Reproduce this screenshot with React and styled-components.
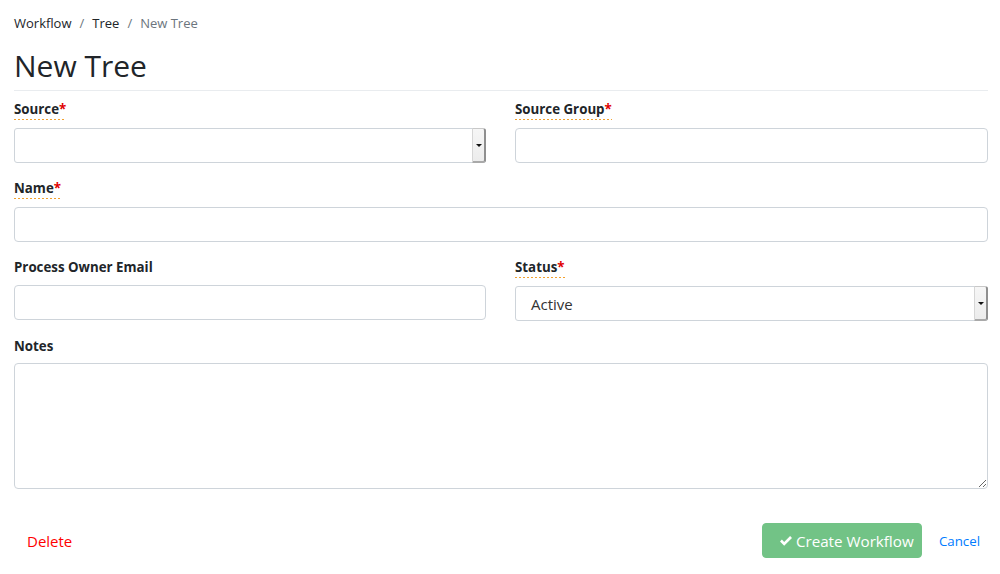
import React from "react";
import styled, { createGlobalStyle } from "styled-components";

const Global = createGlobalStyle`
  html, body { margin: 0; padding: 0; background: #fff; }
  body { font-family: "Open Sans", "Noto Sans", sans-serif; color: #212529; font-size: 15px; }
  * { box-sizing: border-box; }
`;

const Page = styled.div`
  padding: 0 12px 0 14px;
  width: 1000px;
`;

const Breadcrumb = styled.nav`
  display: flex;
  align-items: center;
  padding-top: 13px;
  font-size: 13px;
  line-height: 21px;
  height: 34px;
`;

const Crumb = styled.span`
  color: ${(p) => (p.$active ? "#6c757d" : "#212529")};
`;

const Sep = styled.span`
  color: #6c757d;
  padding: 0 8px;
`;

const TitleBar = styled.div`
  margin-top: 13px;
  padding-bottom: 5px;
  border-bottom: 1px solid #e9ecef;
`;

const Title = styled.h1`
  margin: 0;
  font-size: 30px;
  font-weight: 400;
  line-height: 38px;
  color: #212529;
`;

const Form = styled.div`
  display: grid;
  grid-template-columns: 472px 1fr;
  column-gap: 29px;
  row-gap: 15px;
  padding-top: 8px;
`;

const Group = styled.div`
  display: flex;
  flex-direction: column;
  align-items: flex-start;
  grid-column: ${(p) => (p.$full ? "1 / -1" : "auto")};
`;

const Label = styled.label`
  position: relative;
  display: inline-block;
  font-size: 13.3px;
  font-weight: 700;
  line-height: 20px;
  height: 21px;
  color: #212529;
  margin-bottom: ${(p) => p.$gap || "8px"};
  &::after {
    content: "";
    display: ${(p) => (p.$required ? "block" : "none")};
    position: absolute;
    left: 0;
    right: 0;
    bottom: 0;
    height: 1px;
    background: repeating-linear-gradient(
      to right,
      #f2a12e 0 2px,
      transparent 2px 4px
    );
  }
`;

const Star = styled.span`
  color: #e00000;
`;

const Input = styled.input`
  width: 100%;
  height: 35px;
  border: 1px solid #ced4da;
  border-radius: 4px;
  padding: 6px 12px;
  font: inherit;
  background: #fff;
  outline: none;
`;

const SelectBox = styled.div`
  position: relative;
  width: 100%;
  height: 35px;
  border: 1px solid #ced4da;
  border-radius: 3px;
  background: #fff;
  display: flex;
  align-items: stretch;
`;

const SelectValue = styled.div`
  flex: 1;
  display: flex;
  align-items: center;
  padding-left: 15px;
  font-size: 15px;
  color: #333;
`;

const SelectArrow = styled.div`
  width: 14px;
  margin: -1px -1px -1px 0;
  background: linear-gradient(#f6f6f6, #ececec);
  border-left: 1px solid #d6d6d6;
  border-right: 2px solid #8f8f8f;
  border-top: 1px solid #c8c8c8;
  border-bottom: 2px solid #a9a9a9;
  border-radius: 0 3px 3px 0;
  display: flex;
  align-items: center;
  justify-content: center;
  &::after {
    content: "";
    border-left: 3px solid transparent;
    border-right: 3px solid transparent;
    border-top: 3px solid #111;
  }
`;

const TextArea = styled.textarea`
  width: 100%;
  height: 126px;
  border: 1px solid #ced4da;
  border-radius: 4px;
  padding: 6px 12px;
  font: inherit;
  resize: vertical;
  outline: none;
`;

const Footer = styled.div`
  display: flex;
  align-items: center;
  margin-top: 34px;
  padding: 0 8px 0 13px;
`;

const DeleteLink = styled.a`
  color: #ff0000;
  font-size: 15px;
  text-decoration: none;
  margin-right: auto;
`;

const SubmitButton = styled.button`
  display: inline-flex;
  align-items: center;
  gap: 3px;
  height: 35px;
  width: 160px;
  padding: 0 0 0 16px;
  background: #72c386;
  color: #fff;
  border: 1px solid #72c386;
  border-radius: 4px;
  font: inherit;
  font-size: 15.2px;
`;

const CancelLink = styled.a`
  color: #007bff;
  font-size: 13.3px;
  text-decoration: none;
  margin-left: 17px;
`;

const Check = () => (
  <svg width="14" height="12" viewBox="0 0 14 12" aria-hidden="true">
    <path d="M1 6.5 L2.9 4.6 L5.2 6.9 L11.1 1 L13 2.9 L5.2 10.7 Z" fill="#fff" />
  </svg>
);

const Select = ({ value }) => (
  <SelectBox>
    <SelectValue>{value}</SelectValue>
    <SelectArrow />
  </SelectBox>
);

export default function App() {
  return (
    <>
      <Global />
      <Page>
        <Breadcrumb>
          <Crumb>Workflow</Crumb>
          <Sep>/</Sep>
          <Crumb>Tree</Crumb>
          <Sep>/</Sep>
          <Crumb $active>New Tree</Crumb>
        </Breadcrumb>
        <TitleBar>
          <Title>New Tree</Title>
        </TitleBar>
        <Form>
          <Group>
            <Label $required>
              Source<Star>*</Star>
            </Label>
            <Select value="" />
          </Group>
          <Group>
            <Label $required>
              Source Group<Star>*</Star>
            </Label>
            <Input />
          </Group>
          <Group $full>
            <Label $required>
              Name<Star>*</Star>
            </Label>
            <Input />
          </Group>
          <Group>
            <Label $gap="7px">Process Owner Email</Label>
            <Input />
          </Group>
          <Group>
            <Label $required>
              Status<Star>*</Star>
            </Label>
            <Select value="Active" />
          </Group>
          <Group $full>
            <Label $gap="6px">Notes</Label>
            <TextArea />
          </Group>
        </Form>
        <Footer>
          <DeleteLink href="#">Delete</DeleteLink>
          <SubmitButton>
            <Check />
            Create Workflow
          </SubmitButton>
          <CancelLink href="#">Cancel</CancelLink>
        </Footer>
      </Page>
    </>
  );
}
